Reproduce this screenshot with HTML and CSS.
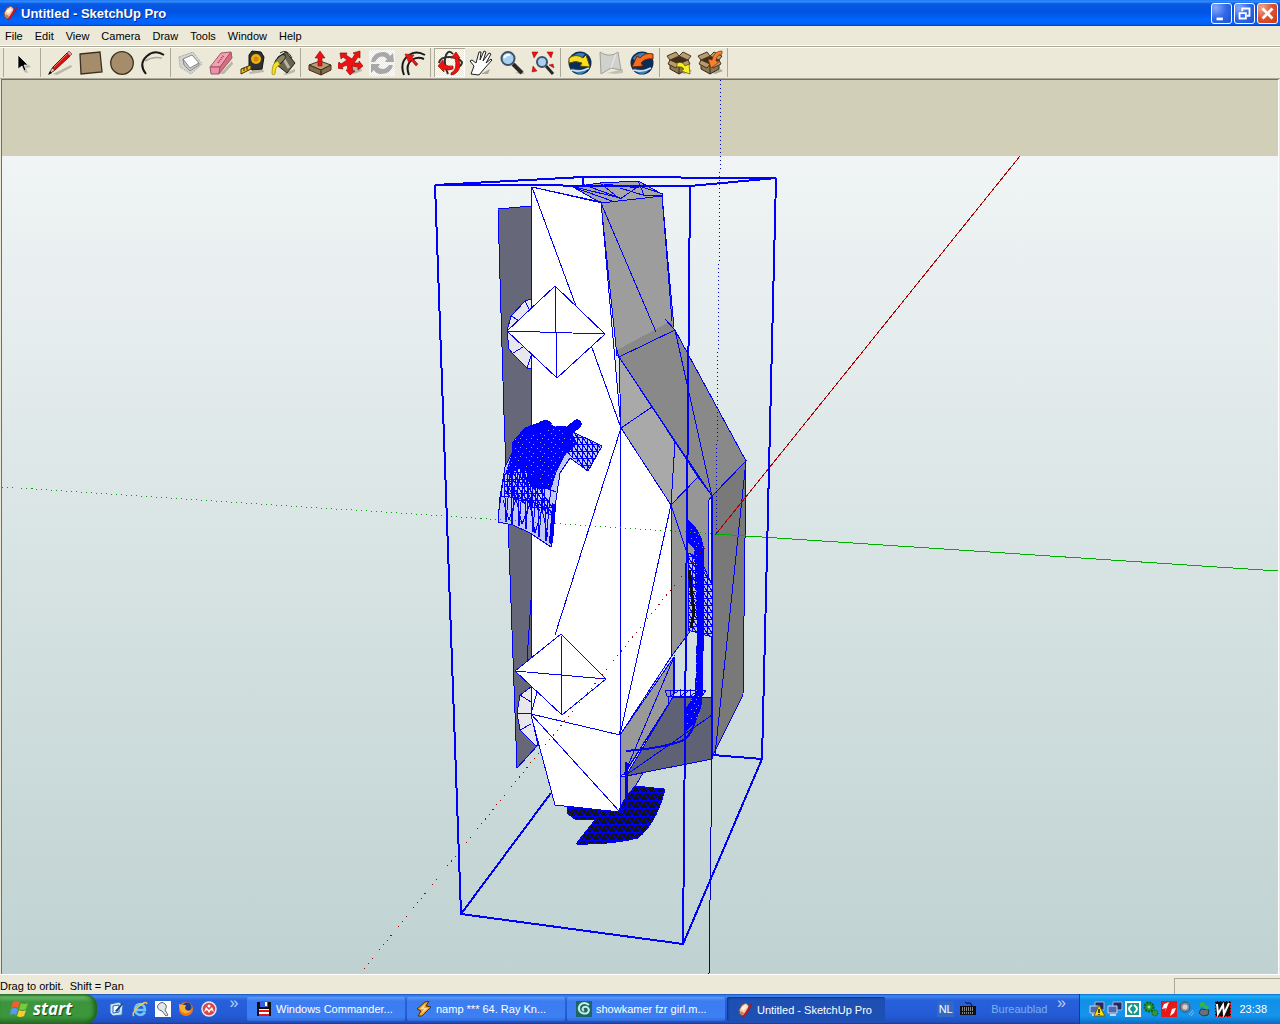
FILE: index.html
```html
<!DOCTYPE html>
<html lang="en">
<head>
    <meta charset="UTF-8">
    <meta name="viewport" content="width=device-width, initial-scale=1.0">
    <title>Untitled - SketchUp Pro</title>
    <link rel="stylesheet" href="styles.css">
</head>
<body>

<!-- Shared icons -->
<svg class="defs" width="0" height="0" aria-hidden="true">
    <symbol id="logo" viewBox="0 0 16 16">
        <path d="M2 8l3-5 4-2 3 3-2 6-4 4-3-2z" fill="#f0c8b0" stroke="#905030"/>
        <path d="M4 6l4-3 2 2-4 4z" fill="#fff4e8"/>
        <path d="M3 9l4 2-1 2-2-1z" fill="#c87850"/>
        <path d="M6 14l8-12 1 1-7 11-2 1z" fill="#e81010" stroke="#901010" stroke-width=".5"/>
    </symbol>
    <symbol id="globe" viewBox="0 0 26 26">
        <circle cx="13" cy="13" r="11.5" fill="#0c2c58"/>
        <path d="M4 8q6-7 14-4l-4 5-9 1zM5 18q8 4 17-1-4 7-9 7-5 0-8-6z" fill="#3c80b8"/>
        <path d="M4 20q9 3 18-2" stroke="#d0e4f0" stroke-width="1.5" fill="none"/>
    </symbol>
    <symbol id="box" viewBox="0 0 26 26">
        <path d="M16 23l7-4 3 2-8 3z" fill="#aaa590"/>
        <path d="M4 10l9 4 9-4v9l-9 5-9-5z" fill="#907650" stroke="#332818"/>
        <path d="M4 10l9-4 9 4-9 4z" fill="#3c2c18"/>
        <path d="M4 10L1 6l9-4 3 4zM22 10l3-4-8-4-4 4zM4 10l-2 4 8 4 3-4zM22 10l2 4-8 4-3-4z" fill="#b89c70" stroke="#443420"/>
        <path d="M13 14v10" stroke="#332818"/>
    </symbol>
    <symbol id="screens" viewBox="0 0 16 16">
        <path d="M6 1h9v8H6z" fill="#202c60" stroke="#a8b4d8"/>
        <path d="M1 5h9v7H1z" fill="#4c6cb0" stroke="#c8d4f0"/>
        <path d="M3 14h6" stroke="#c8d4f0" stroke-width="2"/>
    </symbol>
</svg>

<div class="window">
    <header class="title-bar">
        <svg class="icon16"><use href="#logo"/></svg>
        <h1>Untitled - SketchUp Pro</h1>
        <div class="window-buttons">
            <button type="button" aria-label="Minimize"><svg viewBox="0 0 21 21"><path d="M5 15h7v3H5z" fill="#fff"/></svg></button>
            <button type="button" aria-label="Restore"><svg viewBox="0 0 21 21"><path d="M8 8V5h8v8h-3" fill="none" stroke="#fff" stroke-width="2"/><path d="M5 10h7v6H5z" fill="none" stroke="#fff" stroke-width="2"/></svg></button>
            <button type="button" class="close" aria-label="Close"><svg viewBox="0 0 21 21"><path d="M5 5l11 11m0-11L5 16" stroke="#fff" stroke-width="3"/></svg></button>
        </div>
    </header>

    <nav class="menu-bar">
        <button type="button">File</button>
        <button type="button">Edit</button>
        <button type="button">View</button>
        <button type="button">Camera</button>
        <button type="button">Draw</button>
        <button type="button">Tools</button>
        <button type="button">Window</button>
        <button type="button">Help</button>
    </nav>

    <div class="tool-bar">
        <div class="tool-group">
            <button type="button" aria-label="Select"><svg viewBox="0 0 26 26"><path d="M13 10l8 7-5 1 2 5-4-1z" fill="#bbb7a8"/><path d="M8 5v14l4-3 2 5 2-1-2-5h4z" stroke="#fff" stroke-width=".7"/></svg></button>
        </div>
        <div class="tool-group">
            <button type="button" aria-label="Line"><svg viewBox="0 0 26 26"><path d="M6 24l18-9 1 2-15 8z" fill="#bbb7a8"/><path d="M3 23l3-6L20 3l3 3L8 20z" fill="#e01010" stroke="#700808"/><path d="M20 3l2-2 3 3-2 2z" fill="#f090a0" stroke="#704048" stroke-width=".7"/><path d="M7 17L20 4" stroke="#ff7060"/><path d="M2 24l3-6 3 2z" fill="#e8c898" stroke="#403020" stroke-width=".6"/><path d="M1 25l2-4 2 2z"/></svg></button>
            <button type="button" aria-label="Rectangle"><svg viewBox="0 0 26 26"><path d="M2 4l20-2 2 20-21 2z" fill="#a58d6c" stroke="#3c3020" stroke-width="1.3"/></svg></button>
            <button type="button" aria-label="Circle"><svg viewBox="0 0 26 26"><circle cx="13" cy="13" r="11.3" fill="#a58d6c" stroke="#3c3020" stroke-width="1.3"/></svg></button>
            <button type="button" aria-label="Arc"><svg viewBox="0 0 26 26"><path d="M5 11q8-5 17-3" fill="none" stroke="#aaa698" stroke-width="1.5"/><path d="M6 24Q-2 14 7 6 15-1 24 5" fill="none" stroke="#181818" stroke-width="2"/></svg></button>
        </div>
        <div class="tool-group">
            <button type="button" aria-label="Make Component"><svg viewBox="0 0 26 26"><path d="M2 7l14-5 9 12-11 10L3 17z" fill="#d4d4d0" stroke="#aaa" stroke-dasharray="2 1"/><path d="M6 9l9-4 7 8-9 6-6-5z" fill="#fff" stroke="#888"/><path d="M6 9l1 6 6 6 9-6v-2l-9 5z" fill="#c8c8c8" stroke="#888"/></svg></button>
            <button type="button" aria-label="Eraser"><svg viewBox="0 0 26 26"><path d="M12 24l12-13 1 3-9 10z" fill="#bbb7a8"/><path d="M2 17L13 3l10-1-11 15z" fill="#f8a0b4" stroke="#985868"/><path d="M2 17h10l-1 7H3z" fill="#f090a8" stroke="#985868"/><path d="M12 17L23 2l1 6-13 16z" fill="#d86c84" stroke="#985868"/><path d="M10 13l6-8" stroke="#a84860" stroke-width="2" stroke-dasharray="1 1"/></svg></button>
            <button type="button" aria-label="Tape Measure"><svg viewBox="0 0 26 26"><path d="M10 22l14-3 1 3-14 2z" fill="#bbb7a8"/><path d="M10 5l3-4 9 1 3 5-2 12-10 1-3-4z" fill="#303030" stroke="#101010"/><circle cx="17" cy="9" r="5" fill="#f0b010"/><circle cx="17" cy="9" r="2.5" fill="#c88c10"/><path d="M12 15L2 19v5l10-5z" fill="#f0bc20" stroke="#403000"/><path d="M5 18v3m3-4v3" stroke="#302000"/></svg></button>
            <button type="button" aria-label="Paint Bucket"><svg viewBox="0 0 26 26"><path d="M13 24l12-5v3l-9 3z" fill="#bbb7a8"/><path d="M8 7l8-5 9 11-8 10-10-8z" fill="#686450" stroke="#202018"/><path d="M12 6l7 12" stroke="#b8b4a0" stroke-width="3"/><ellipse cx="10" cy="10" rx="3" ry="7" transform="rotate(45 10 10)" fill="#888468" stroke="#202018"/><path d="M10 3q7-5 12 5" fill="none" stroke="#303028"/><path d="M8 11q-6 1-6 12 0 3 3 1 0-8 5-9z" fill="#f8e020" stroke="#908000" stroke-width=".7"/></svg></button>
        </div>
        <div class="tool-group">
            <button type="button" aria-label="Push/Pull"><svg viewBox="0 0 26 26"><path d="M2 15l11-4 11 4-10 5z" fill="#b89c74" stroke="#403020"/><path d="M2 15v5l12 5v-5zM24 15v5l-10 5v-5z" fill="#846c48" stroke="#403020"/><path d="M11 16V8H8l5-7 5 7h-3v8z" fill="#f01010" stroke="#801010" stroke-width=".6"/></svg></button>
            <button type="button" aria-label="Move"><svg viewBox="0 0 26 26"><path d="M8 19l13-6 3 8-8 3z" fill="#bbb7a8"/><path d="M14 9l3-5-2-1 7-2 0 7-2-1-4 6 5 0 0-2 4 5-5 4 0-3-6-1 1 5 2 0-5 4-4-5 2 0-1-5-5 2 1 2-6-1 2-6 2 2 6-4-4-3-2 2-1-6 7 0-1 2z" fill="#f01010" stroke="#901010" stroke-width=".7"/></svg></button>
            <button type="button" class="disabled" aria-label="Rotate"><svg viewBox="0 0 26 26"><path d="M2 12Q4 2 14 2q5 0 7 4l3-3 1 9h-9l2-3q-6-6-12 3zM24 15q-2 9-12 9-5 0-7-4l-3 3 0-9h9l-2 3q6 5 11-2z" fill="#a8a8a4"/></svg></button>
            <button type="button" aria-label="Offset"><svg viewBox="0 0 26 26"><path d="M4 25Q-1 12 9 5 16 0 25 5M9 25Q5 15 12 10q5-4 12-1" fill="none" stroke="#181818" stroke-width="2"/><path d="M16 16l-5-6-2 3L5 4l9 1-2 3 6 6z" fill="#f01010" stroke="#801010" stroke-width=".6"/></svg></button>
        </div>
        <div class="tool-group">
            <button type="button" class="pressed" aria-label="Orbit" aria-pressed="true"><svg viewBox="0 0 26 26"><path d="M16 4Q12-1 9 5q-3 9 2 19M2 13q1-6 10-6t13 5q0 4-5 5" fill="none" stroke="#303030" stroke-width="2"/><path d="M14 8l5-6 4 6h-2q4 7 0 13-3 4-7 4l0-2q7-3 4-15zM1 16l5-6 1 4q4 3 9 2v3q-5 2-9 0l0 3z" fill="#f01010" stroke="#901010" stroke-width=".7"/></svg></button>
            <button type="button" aria-label="Pan"><svg viewBox="0 0 26 26"><path d="M13 24l9-5-2 5z" fill="#aaa698"/><path d="M3 24l3-8-4-5 2-1 4 3 3-11 2 0-1 8 4-9 2 1-3 9 6-8 2 1-5 9 5-4 1 1-8 9-5 6z" fill="#fff" stroke="#202020"/></svg></button>
            <button type="button" aria-label="Zoom"><svg viewBox="0 0 26 26"><path d="M16 23l8-2 1 3z" fill="#aaa698"/><path d="M14 14l9 9" stroke="#282828" stroke-width="4"/><circle cx="9" cy="8.5" r="6.5" fill="#a8d0f0" stroke="#405068" stroke-width="2"/><path d="M5 8q2-4 6-3" fill="none" stroke="#fff" stroke-width="2"/></svg></button>
            <button type="button" aria-label="Zoom Extents"><svg viewBox="0 0 26 26"><path d="M16 16l7 8" stroke="#282828" stroke-width="3"/><circle cx="12" cy="12" r="5" fill="#a8d0f0" stroke="#405068" stroke-width="2"/><path d="M2 2l6 0-4 6zM23 2l-6 0 4 6zM2 22l1-6 4 5zM24 18l-5-3 4-1z" fill="#f01010" stroke="#801010" stroke-width=".5"/></svg></button>
        </div>
        <div class="tool-group">
            <button type="button" aria-label="Get Current View"><svg viewBox="0 0 26 26"><use href="#globe" width="26" height="26"/><path d="M2 8q7-5 14 0l3-3 4 12-10-1 2-3q-6-3-13 0z" fill="#f8e020" stroke="#605000"/></svg></button>
            <button type="button" aria-label="Toggle Terrain"><svg viewBox="0 0 26 26"><path d="M9 23l16-4v4l-8 1z" fill="#c4c0b4"/><path d="M2 2q7 5 15 2l3-2 3 18-10-2-10 6z" fill="#d0d0cc" stroke="#a0a09c"/><path d="M13 18l5-14" stroke="#eee"/></svg></button>
            <button type="button" aria-label="Place Model"><svg viewBox="0 0 26 26"><use href="#globe" width="26" height="26"/><path d="M24 4q-8-2-13 4L8 6 3 17l11-1-2-3q4-5 12-4z" fill="#f86c20" stroke="#702800"/></svg></button>
        </div>
        <div class="tool-group">
            <button type="button" aria-label="Get Models"><svg viewBox="0 0 26 26"><use href="#box" width="26" height="26"/><path d="M11 13q6-2 8 3l4-2 1 10-9-3 3-2q-2-3-7-2z" fill="#f8f020" stroke="#605000" stroke-width=".7"/></svg></button>
            <button type="button" aria-label="Share Model"><svg viewBox="0 0 26 26"><use href="#box" width="26" height="26"/><path d="M25 1q-8 0-10 9l-4-1 3 9 8-6-3-1q0-6 6-7z" fill="#f88030" stroke="#803000" stroke-width=".7"/></svg></button>
        </div>
    </div>

    <main class="canvas">
        <svg class="model" viewBox="2 80 1276 894" preserveAspectRatio="xMidYMid slice" role="img" aria-label="Car model in wireframe">
            <defs>
                <linearGradient id="ground" x1="0" y1="0" x2="0" y2="1">
                    <stop offset="0" stop-color="#f0f4f5"/>
                    <stop offset="1" stop-color="#bfd2d1"/>
                </linearGradient>
                <pattern id="dense" width="11" height="9" patternUnits="userSpaceOnUse">
                    <path d="M0 0h11v9H0z" fill="#00f"/>
                    <path d="M1 1h1v1H1zM5 3h1v1H5zM9 7h1v1H9zM3 6h1v1H3z" fill="#a0a4d8"/>
                </pattern>
                <pattern id="mesh" width="5" height="7" patternUnits="userSpaceOnUse">
                    <path d="M0 0l5 7M0 3h5M2 0v7" stroke="#00f"/>
                </pattern>
                <pattern id="darkMesh" width="8" height="8" patternUnits="userSpaceOnUse">
                    <path d="M0 0h8v8H0z" fill="#141418"/>
                    <path d="M0 0h8M0 8l4-8 4 8" stroke="#00f" fill="none"/>
                </pattern>
            </defs>

            <rect x="2" y="80" width="1276" height="76" fill="#d2cfb8"/>
            <rect x="2" y="156" width="1276" height="818" fill="url(#ground)"/>

            <!-- Faces -->
            <g class="edge">
                <path d="M498 209l33-3v520l7 19-21 23-7-193-6-160z" fill="#666879"/>
                <path d="M531 299l-6 2-14 15-4 15 2 18 4 5 14 14h4zM531 687l-11 8-3 18 3 17 15 15h3l-7-31z" fill="#e8e8ec"/>
                <path d="M511 316l7 4M525 301l4 8M513 353l10-6M527 368l4-12M520 695l11 7M517 713l14 1M520 730l11-6M531 600l-4 60" fill="none"/>
                <path d="M673 697h39v62l-86 17z" fill="#5f6274"/>
                <path d="M601 203l61-8 12 133-57 28z" fill="#9d9d9d"/>
                <path d="M573 187l27-4 38-2 24 13v2l-61 7z" fill="#a8a8a8"/>
                <path d="M619 357l56-27 71 131-34 35z" fill="#898989"/>
                <path d="M619 357l33 50 46 70-27 28-50-77z" fill="#a9a9a9"/>
                <path d="M671 505l27-28 14 19-4 5v80l4 56-21-7-20 27z" fill="#969696"/>
                <path d="M712 496l34-35-3 234-30 60z" fill="#797979"/>
                <path d="M620 735l54-78-1 40-49 77-4 2z" fill="#999"/>
                <path d="M620 776h6l17-3-23 39z" fill="#999"/>
                <path d="M532 187l69 15 20 226 50 77v152l-51 78v77l-65-7-24-90V187z" fill="#fff"/>
            </g>
            <path d="M617 350l54-29 4 9-56 27z" fill="#898989"/>

            <!-- Edges -->
            <g class="edge" fill="none">
                <path d="M532 187l44 119M591 345l30 83-66 207M621 428l-1 307M671 505l-51 230M531 714l89 21M531 714l89 98M537 692l-6 22"/>
                <path d="M601 203l55 129M619 357l56-27 37 166M665 319l10 11M621 428l31-21M671 505l27-28M675 442l-4 63 20 60M746 461l-31 294M711 496v260"/>
                <path d="M573 187l39 14M575 187l45 11M582 184l38 14M600 183l20 16 19-13 24 8M638 181l6 14 18 1M620 188l26 8M532 187l70 16M604 184l35 4"/>
                <path d="M626 775l86-60M674 657l-50 118M674 657v36M673 697l-49 78M620 776h8M662 196l10 125M617 350l2 7"/>
                <path d="M665 690h41l-4 6h-35zM670 690v6l10-6v6l10-6v6l10-6M668 697v6"/>
            </g>
            <g class="edge" fill="#fff">
                <path d="M555 286l50 48-48 44-50-47zM561 634l45 45-44 36-47-44z"/>
                <path d="M555 286l2 92M507 331l98 3M561 634l1 81M515 671l91 8"/>
            </g>

            <!-- Hood mesh -->
            <path class="edge" d="M498 522l2-25 5-30 7-14v-10l13-15 22-8 6 6h15l9-7 5 5-9 8 29 14-14 25-18-13-10 15-4 27-5 47-21-14-17-8z" fill="#c4c8f4"/>
            <path d="M505 475l7-22v-10l13-15q10-2 16-7 9-3 12 5h15q4-5 9-7 6 2 4 8l-9 6 5 10-12 12-9 18-5 17-20-3-6-20z" fill="url(#dense)"/>
            <path d="M573 432l29 14-14 25-18-15-7-10zM508 470l20-10 20 40 8 5-2 12-24-10-26-14z" fill="url(#mesh)"/>
            <path d="M577 424l-9 8M547 425l-20 8" stroke="#00f" stroke-width="9" stroke-linecap="round"/>
            <g class="edge" fill="none">
                <path d="M501 497q28-2 54 17M502 482q28-2 54 10M499 510l5-36 2 48 5-60 1 62 5-64 2 66 5-60 2 63 4-60 3 63 4-60 2 65 5-60 2 64 5-55"/>
                <path d="M503 500l6 20 7-21 6 25 8-20 5 29 7-24 6 28M510 470l5 30 8-38 7 42 7-34 9 42"/>
                <path d="M551 542l3-36" stroke-width="4" stroke-linecap="round"/>
            </g>

            <!-- Right side mesh -->
            <path class="edge" d="M688 553l12 5 12 27v52l-24-7z" fill="#c0c4dc"/>
            <path d="M688 553l12 5 12 27v52l-24-7z" fill="url(#mesh)"/>
            <path d="M689 570l5 42-3 16" fill="none" stroke="#101010" stroke-width="3"/>
            <path d="M688 520q14 10 16 30v85l-2 65q-1 18-16 32v-24l9-14 2-65-3-80-6-6z" fill="url(#dense)"/>
            <path d="M700 550v145" stroke="#00f" stroke-width="5"/>
            <path d="M626 751q38-3 58-11 8-6 12-22" fill="none" stroke="#00f" stroke-width="2"/>

            <!-- Underside mesh -->
            <path class="edge" d="M567 807l51 5 6-12 11-14 29 3v4q-8 30-26 45-28 7-62 6l19-24-20-1-8-6z" fill="url(#darkMesh)"/>
            <path d="M626 762l1 44-8 6" fill="none" stroke="#0000e0" stroke-width="3"/>

            <!-- Axes -->
            <g class="axis">
                <path d="M721 80l-5 454" stroke="#0000c0" stroke-dasharray="1 3"/>
                <path d="M712 755l-3 219" stroke="#0000c0"/>
                <path d="M716 534L2 487" stroke="#00a000" stroke-dasharray="1 4"/>
                <path d="M716 534l562 37" stroke="#00b000"/>
                <path d="M716 534L360 974" stroke="#a00000" stroke-dasharray="1 5"/>
                <path d="M716 534l304-378" stroke="#b00000"/>
            </g>

            <!-- Selection box -->
            <g class="bounds">
                <path d="M435 185l148-8 193 1-86 8zl26 729 222 30 79-185-49-4M776 178l-14 581M690 186l-7 758M461 914l90-121M583 177v8"/>
            </g>
        </svg>
    </main>

    <footer class="status-bar">
        <span>Drag to orbit.&nbsp; Shift = Pan</span>
        <div class="value-box"></div>
    </footer>
</div>

<div class="task-bar">
    <button type="button" class="start-button">
        <svg viewBox="0 0 20 20"><path d="M3 3q4-2 7 0L8 9q-3-2-7 0z" fill="#f06028"/><path d="M11 4q3 2 7 0l-2 6q-4 2-7 0z" fill="#7cc83c"/><path d="M1 10q3-2 7 0l-2 6q-3-2-6 0z" fill="#5c98f0"/><path d="M9 11q3 2 7 0l-2 6q-4 2-7 0z" fill="#f8cc30"/></svg>
        <span>start</span>
    </button>
    <div class="quick-launch">
        <button type="button" aria-label="Show Desktop"><svg viewBox="0 0 16 16"><path d="M1 3l9-2 4 3-1 10-9 1-3-3z" fill="#c8e4fc" stroke="#2868b8"/><path d="M4 5l6-1v7l-6 1z" fill="#fff" stroke="#2868b8"/><path d="M6 10l7-8 1 1-6 8z" fill="#104888"/></svg></button>
        <button type="button" aria-label="Internet Explorer"><svg viewBox="0 0 16 16"><path d="M13 11q-2 3-5 3-5-1-5-6 1-5 5-5 5 1 5 6H4" fill="none" stroke="#70c8ff" stroke-width="2.5"/><path d="M2 15q-3-2 4-9 8-7 9-3" fill="none" stroke="#f8c840" stroke-width="1.5"/></svg></button>
        <button type="button" aria-label="Light bulb"><svg viewBox="0 0 16 16"><path d="M0 0h16v16H0z" fill="#fff"/><path d="M7 10Q1 8 3 4q4-5 8 0 1 3-1 5l3 5-2 1z" fill="#e4e8ec" stroke="#606870"/></svg></button>
        <button type="button" aria-label="Firefox"><svg viewBox="0 0 16 16"><circle cx="8" cy="8" r="7" fill="#f07818"/><circle cx="9" cy="6" r="4.5" fill="#203c90"/><path d="M1 3l3 1 4 0-1 3q1 4 6 2-2 4-7 3-5-2-5-9z" fill="#f8b030"/></svg></button>
        <button type="button" aria-label="Nero"><svg viewBox="0 0 16 16"><circle cx="8" cy="8" r="7" fill="#d84848" stroke="#e8e8f0" stroke-width="1.5"/><path d="M3 11l2-5 3 3 3-3 2 5-3-2-2 3-2-3z" fill="#fff"/><circle cx="8" cy="5" r="1.5" fill="#fff"/></svg></button>
    </div>
    <button type="button" class="chevron" aria-label="More quick launch items">»</button>
    <div class="tasks">
        <button type="button"><svg class="icon16" viewBox="0 0 16 16"><path d="M1 1h14v14H1z" fill="#101010"/><path d="M4 0h8v6H4z" fill="#3860d8"/><path d="M9 1h2v4H9z" fill="#fff"/><path d="M3 8h10v7H3z" fill="#fff"/><path d="M3 9h10v2H3zM3 13h10v2H3z" fill="#e01818"/></svg><span>Windows Commander...</span></button>
        <button type="button"><svg class="icon16" viewBox="0 0 16 16"><path d="M9 1l4-1-3 5 5 1-9 9-4 0 3-5-4-2z" fill="#f8a020" stroke="#503000"/><path d="M9 3L4 8l4 0-3 5 7-6H8z" fill="#fce0a0"/></svg><span>namp *** 64. Ray Kn...</span></button>
        <button type="button"><svg class="icon16" viewBox="0 0 16 16"><path d="M0 0h16v16H0z" fill="#186868"/><path d="M13 4Q8 0 4 4q-3 5 2 8 6 2 7-3-1-4-5-3-3 2 0 4" fill="none" stroke="#c8ece4" stroke-width="2"/></svg><span>showkamer fzr girl.m...</span></button>
        <button type="button" class="active"><svg class="icon16"><use href="#logo"/></svg><span>Untitled - SketchUp Pro</span></button>
    </div>
    <div class="desk-bar">
        <button type="button" class="language">NL</button>
        <svg class="icon16" viewBox="0 0 16 16"><path d="M5 1q2 2 4 1t3 3" fill="none" stroke="#101010"/><path d="M0 5h16v9H0z" fill="#101010"/><path d="M2 7h12M2 9h12M2 12h12" stroke="#fff" stroke-dasharray="1 1"/></svg>
        <button type="button" class="desktop-label">Bureaublad</button>
        <button type="button" class="chevron" aria-label="Show desktop items">»</button>
    </div>
    <div class="tray">
        <svg class="icon16" viewBox="0 0 16 16"><use href="#screens"/><path d="M10 4l6 11H5z" fill="#f8e010" stroke="#705800"/><path d="M10 8v4m0 1v1" stroke="#101010" stroke-width="1.5"/></svg>
        <svg class="icon16"><use href="#screens"/></svg>
        <svg class="icon16" viewBox="0 0 16 16"><path d="M1 1h14v14H1z" fill="#189888" stroke="#fff" stroke-width="2"/><path d="M7 4q-6 4 0 8M9 4q6 4 0 8" fill="none" stroke="#fff" stroke-width="2"/></svg>
        <svg class="icon16" viewBox="0 0 16 16"><circle cx="6" cy="6" r="4.5" fill="#209830" stroke="#106020" stroke-width="2" stroke-dasharray="2 1"/><circle cx="12" cy="12" r="3" fill="#309838" stroke="#106020" stroke-dasharray="2 1"/><circle cx="6" cy="6" r="1.5" fill="#a0d8a0"/></svg>
        <svg class="icon16" viewBox="0 0 16 16"><path d="M0 0h16v16H0z" fill="#e81818"/><path d="M8 1L3 3 1 8l4-1-1 4zM9 15l4-3 2-5-4 1 1-4z" fill="#fff"/></svg>
        <svg class="icon16" viewBox="0 0 16 16"><circle cx="6" cy="6" r="5" fill="#888c94" stroke="#484c54"/><circle cx="6" cy="6" r="2.5" fill="#d0d4dc"/><path d="M10 14l4-5m-2 6l3-4" stroke="#90b0f0"/></svg>
        <svg class="icon16" viewBox="0 0 16 16"><path d="M4 8l8 1-1 5-5 1-4-3z" fill="#687078" stroke="#303840"/><path d="M3 2l5-1-1 2 5 3-2 3-5-4-2 1z" fill="#38b838"/></svg>
        <svg class="icon16" viewBox="0 0 16 16"><path d="M0 0h16v16H0z" fill="#101010" stroke="#e81818" stroke-width="2" stroke-dasharray="2 1"/><path d="M2 3l1 10 5-9 1 9 5-11" fill="none" stroke="#fff" stroke-width="2"/></svg>
        <time>23:38</time>
    </div>
</div>

</body>
</html>
```
FILE: styles.css
```css
body {
    margin: 0;
    height: 100vh;
    display: flex;
    flex-direction: column;
    overflow: hidden;
    background: #ece9d8;
    color: #000;
    font-family: "Liberation Sans", Arial, sans-serif;
    font-size: 11px;
}
button {
    margin: 0;
    padding: 0;
    border: none;
    background: none;
    color: inherit;
    font: inherit;
}
.defs {
    position: absolute;
}
.icon16 {
    width: 16px;
    height: 16px;
    flex: none;
}
.window {
    flex: 1;
    min-height: 0;
    display: flex;
    flex-direction: column;
}

/* Title bar */
.title-bar {
    height: 26px;
    display: flex;
    align-items: center;
    gap: 3px;
    padding: 0 2px;
    box-sizing: border-box;
    background: linear-gradient(#0a6cf0 0, #3c94ff 1px, #0858e0 4px, #0054e3 12px, #0066ff 20px, #0062f8 24px, #0040c0 26px);
}
.title-bar h1 {
    flex: 1;
    margin: 0;
    color: #fff;
    font-size: 13px;
    font-weight: bold;
    text-shadow: 1px 1px #0a2a80;
}
.window-buttons {
    display: flex;
    gap: 2px;
}
.window-buttons button {
    width: 21px;
    height: 21px;
    box-sizing: border-box;
    border: 1px solid #fff;
    border-radius: 3px;
    background: radial-gradient(circle at 20% 20%, #88a8f8, #3068e8 50%, #1c50d0);
}
.window-buttons .close {
    background: radial-gradient(circle at 20% 20%, #f0a890, #e05030 50%, #c83c10);
}
.window-buttons svg {
    display: block;
    width: 19px;
    height: 19px;
}

/* Menus */
.menu-bar {
    height: 19px;
    display: flex;
    align-items: center;
    gap: 12px;
    padding: 0 5px;
    border-bottom: 1px solid #fff;
}

/* Tools */
.tool-bar {
    height: 31px;
    display: flex;
    align-items: center;
    padding-left: 7px;
    border-top: 1px solid #aca899;
    border-bottom: 1px solid #aca899;
    background: linear-gradient(#fff, #fff) 0 0 / 100% 1px no-repeat;
}
.tool-group {
    display: flex;
    padding-right: 2px;
    border-right: 1px solid #aca899;
    margin-right: 3px;
}
.tool-group:first-child {
    box-shadow: -3px 0 #ece9d8, -4px 0 #aca899;
}
.tool-group button {
    width: 31px;
    height: 29px;
}
.tool-group svg {
    display: block;
    width: 26px;
    height: 26px;
    margin: 0 auto;
}
.tool-group .pressed {
    box-shadow: inset 1px 1px #aca899, inset -1px -1px #fff;
    background: repeating-conic-gradient(#fff 0 25%, #ece9d8 0 50%) 0 0 / 2px 2px;
}
.tool-group .disabled svg {
    background: repeating-conic-gradient(#fff 0 25%, #ece9d8 0 50%) 0 0 / 2px 2px;
}

/* Drawing area */
.canvas {
    flex: 1;
    min-height: 0;
    border: 1px solid #716f64;
    border-width: 1px 1px 0 1px;
    border-right-color: #fff;
    margin: 0 1px;
    display: flex;
}
.model {
    width: 100%;
    height: 100%;
    shape-rendering: crispEdges;
}
.edge {
    stroke: #00f;
    stroke-width: 1px;
}
.axis {
    fill: none;
    stroke-width: 1px;
}
.bounds {
    fill: none;
    stroke: #00f;
    stroke-width: 2px;
}

/* Status bar */
.status-bar {
    height: 19px;
    display: flex;
    justify-content: space-between;
    border-top: 1px solid #fff;
    line-height: 22px;
}
.value-box {
    width: 105px;
    margin-top: 3px;
    border: 1px solid #aca899;
    border-width: 1px 0 0 1px;
}

/* Task bar */
.task-bar {
    height: 30px;
    display: flex;
    align-items: center;
    color: #fff;
    background: linear-gradient(#1c50b8, #4088f0 2px, #2860dc 6px, #245cd8 20px, #2050c0 28px, #183c98);
}
.start-button {
    width: 97px;
    height: 30px;
    display: flex;
    align-items: center;
    gap: 3px;
    padding-left: 10px;
    border-radius: 0 12px 12px 0;
    background: linear-gradient(#2c7c2c, #68b868 3px, #3c943c 8px, #3c983c 22px, #286c28);
    box-shadow: inset -3px 0 4px #1c601c;
    font-family: "Open Sans", sans-serif;
    font-size: 17px;
    font-style: italic;
    font-weight: bold;
    line-height: 24px;
    text-shadow: 1px 1px 1px #184818;
}
.start-button svg {
    width: 20px;
    height: 20px;
}
.quick-launch {
    display: flex;
    gap: 7px;
    padding-left: 12px;
}
.quick-launch button,
.quick-launch svg {
    display: block;
    width: 16px;
    height: 16px;
}
.chevron {
    width: 16px;
    height: 26px;
    color: #b8d0f8;
    font-size: 16px;
    line-height: 12px;
    padding-bottom: 12px;
}
.quick-launch + .chevron {
    margin: 0 5px 0 9px;
}
.tasks {
    flex: 1;
    display: flex;
    gap: 2px;
}
.tasks button {
    width: 158px;
    height: 24px;
    display: flex;
    align-items: center;
    gap: 4px;
    padding-left: 9px;
    box-sizing: border-box;
    border-radius: 2px;
    background: linear-gradient(#5c9cfc, #3c7cf0 4px, #3c80f4 20px, #3068d8);
    white-space: nowrap;
}
.tasks .active {
    background: #1e50b4;
    box-shadow: inset 1px 1px 2px #103480;
    padding: 1px 0 0 10px;
}
.desk-bar {
    display: flex;
    align-items: center;
    gap: 6px;
    padding-right: 10px;
}
.language {
    width: 17px;
    height: 16px;
    background: #316ac5;
}
.desktop-label {
    color: #78b0f0;
    padding-left: 9px;
}
.tray {
    height: 30px;
    display: flex;
    align-items: center;
    gap: 2px;
    padding: 0 13px 0 9px;
    border-left: 1px solid #0c3c98;
    background: linear-gradient(#1068c8, #20b0f8 2px, #1090e8 6px, #1494ec 22px, #0c68c0);
}
.tray time {
    padding-left: 6px;
}
```
